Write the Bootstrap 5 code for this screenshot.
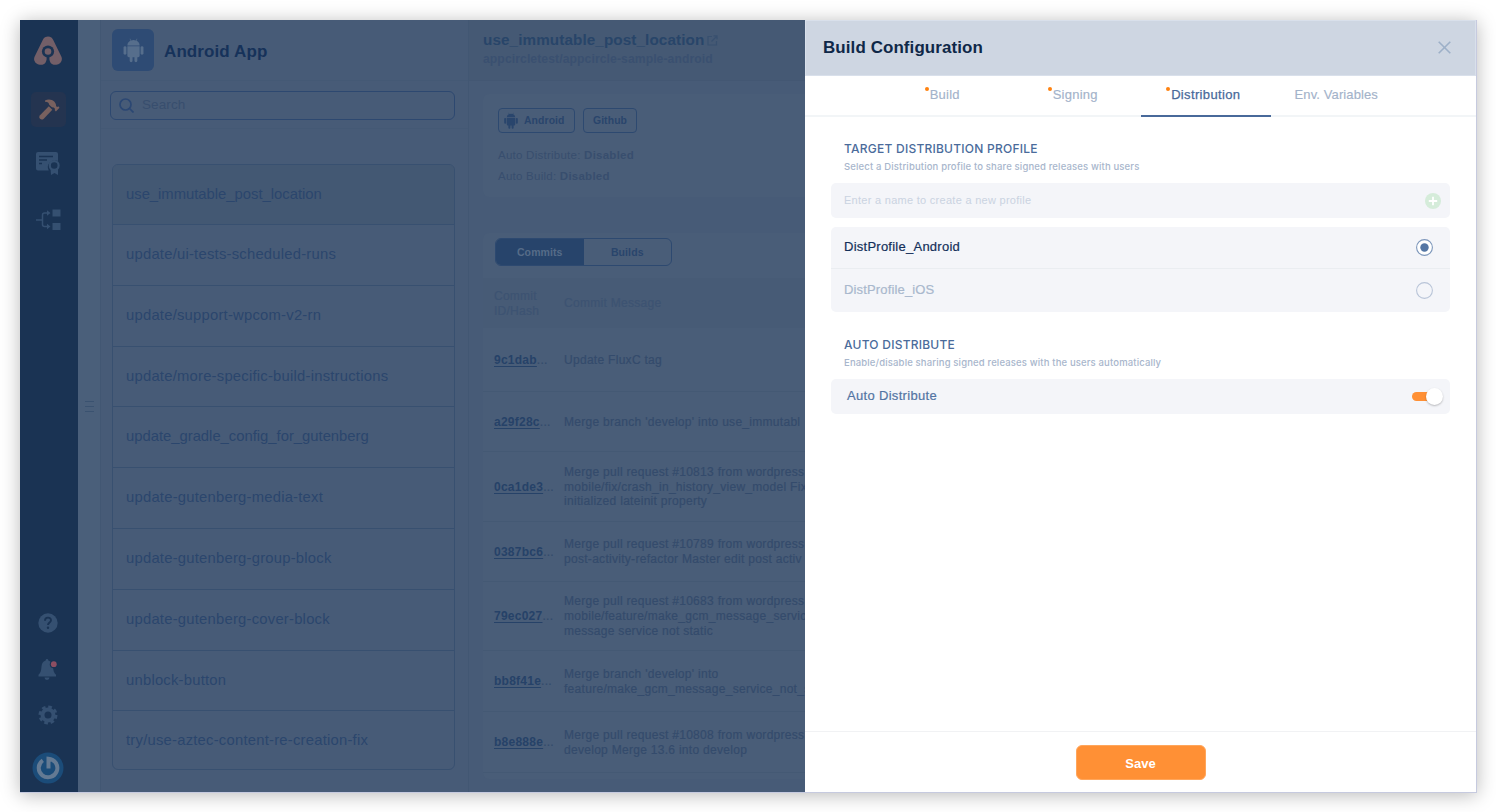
<!DOCTYPE html>
<html lang="en">
<head>
<meta charset="utf-8">
<meta name="viewport" content="width=device-width, initial-scale=1">
<title>Build Configuration</title>
<link href="https://cdn.jsdelivr.net/npm/bootstrap@5.3.0/dist/css/bootstrap.min.css" rel="stylesheet">
<style>
body{font-family:"Liberation Sans",Arial,sans-serif;background:#fff;height:812px;padding:20px;line-height:1.2;letter-spacing:.1px}
.frame{width:1457px;height:773px;border-right:1px solid #c6cadf;border-bottom:1px solid #c6cadf;box-shadow:0 2px 18px rgba(0,0,0,.28);background:#475b77}
.t{white-space:nowrap}
.rail{width:58px;background:#1a3353;padding:16px 2px 8px 0}
.rail svg{display:block}
.hot{width:35px;height:35px;border-radius:5px;background:#243450;margin-top:27px}
.grip{width:23px;background:#4a5f7a;border-right:1px solid #425773}
.side{width:368px;border-right:1px solid #425773}
.sidehead{height:61px;border-bottom:1px solid #445975;padding-left:11px}
.appicon{width:42px;height:42px;border-radius:6px;background:#2e4b74}
.apptitle{font-size:17px;font-weight:700;color:#16325a;margin:4px 0 0 10px}
.search{margin:10px 13px 0 9px;height:29px;border:1.5px solid #2d4870;border-radius:6px;padding-left:8px}
.search .t{font-size:13.5px;color:#384e6e;margin-left:8px}
.strip{margin-top:8px;height:1px;background:#445975}
.branches{margin:35px 13px 0 11px;height:606px;border:1px solid #385070;border-radius:6px}
.branches .brow{height:60.8px;padding:0 0 0 13px;border-bottom:1px solid #385070;font-size:14.8px;color:#2b466d;flex:none;letter-spacing:.23px}
.branches .brow.snug{letter-spacing:0}
.branches .brow:first-child{background:#435873;height:60px}
.branches .brow:last-child{border:0;height:59px}
.content{width:336px}
.repo{height:61px;background:#455974;border-bottom:1px solid #435773;padding:11px 0 0 14px}
.repo1{font-size:15.25px;font-weight:700;color:#284569}
.repo2{font-size:12.15px;font-weight:700;color:#3a5070;margin-top:3px}
.panel{margin-left:14px;background:#495d78;border-radius:6px 0 0 6px}
.tagbtn{height:25px;border:1.4px solid #2d4970;border-radius:4px;font-size:10.4px;font-weight:700;color:#29456c}
.tagbtn .t{margin-top:2px}
.meta{font-size:11.5px;color:#384e6e;letter-spacing:.25px}
.seg{width:177px;height:28px;border:1.5px solid #2d4970;border-radius:6px;font-size:10.5px;font-weight:700;color:#29456c;overflow:hidden}
.seg .on{background:#27446b;color:#566c88}
.trow{border-bottom:1px solid #445974;padding:1px 0 0 11px;font-size:12px;line-height:14.7px;color:#344b6c;letter-spacing:.29px;-webkit-text-stroke:.2px}
.trow.h{background:#475b76;color:#3d5372;border:0}
.trow .id{width:70px;flex:none;letter-spacing:.25px}
.trow .id b{color:#264268;text-decoration:underline;text-underline-offset:2px;-webkit-text-stroke:0}
.drawer{width:671px;background:#fff}
.dhead{height:56px;background:#ced6e2;border:1px solid #d9e0eb;padding:0 24px 0 17px}
.dtitle{font-size:16.95px;font-weight:700;color:#0f2848;margin-top:1px}
.dhead svg{margin-bottom:2px}
.tabs{height:41px;border-bottom:2px solid #f2f5f7}
.tab{width:130.5px;height:41px;padding-bottom:4px;font-size:13px;color:#a3b3ca;-webkit-text-stroke:.15px}
.tab.req{padding-right:5px;letter-spacing:.25px}
.tab.on{color:#48699a;border-bottom:2px solid #48699a;padding-bottom:2px;letter-spacing:.35px;-webkit-text-stroke:.25px}
.tab i{width:4px;height:4px;border-radius:50%;background:#ff8210;margin:-11px 1px 0 0}
.sec{font-family:Inter,sans-serif;font-size:12px;font-weight:500;color:#4a6b9b;line-height:15px;padding-left:13px;letter-spacing:.24px}
.sub{font-family:Inter,sans-serif;font-size:9.5px;font-weight:500;color:#a8b6cc;line-height:12px;padding-left:13px;margin-top:5px;letter-spacing:.15px}
.box{background:#f4f5f9;border-radius:5px}
.newname{font-size:11px;color:#cad3e1;letter-spacing:.28px}
.opt{font-size:13px;letter-spacing:.25px;margin-top:-2px;-webkit-text-stroke:.2px}
.save{width:130px;height:35px;border-radius:6px;background:#ff9035;color:#fff;border:1px solid #ffa65c;font-size:13px;font-weight:700;padding:2px 0 0}
.track{width:24px;height:9px;border-radius:5px;background:#ff9035}
.knob{width:17px;height:17px;border-radius:50%;background:#fff;box-shadow:0 1px 2px rgba(0,0,0,.25);margin-left:-10px}
.dfoot{height:61px;border-top:1px solid #f1f2f4;padding-top:13px}
</style>
</head>
<body>
<svg width="0" height="0" class="position-absolute"><defs>
<symbol id="droid" viewBox="0 0 24 26"><path d="M5.600 8.200a6.500 6 0 0 1 3.400-5L7.900 1.400l.5-.3 1.200 1.900a7.500 7.500 0 0 1 4.800 0L15.600 1.100l.5.3L15 3.200a6.500 6 0 0 1 3.400 5z"/><path d="M5.600 9h12.800v10a1.500 1.500 0 0 1-1.500 1.500H16v3.700a1.500 1.500 0 0 1-3 0v-3.700h-2v3.700a1.500 1.500 0 0 1-3 0v-3.700h-.9A1.500 1.500 0 0 1 5.600 19z"/><rect x="1.600" y="9" width="3" height="9" rx="1.500"/><rect x="19.400" y="9" width="3" height="9" rx="1.500"/></symbol>
</defs></svg>
<div class="frame d-flex overflow-visible">
  <nav class="rail d-flex flex-column align-items-center">
    <svg width="28" height="29" viewBox="0 0 28 29"><path d="M14 6.200 5.800 23h16.400z" fill="#735f68" stroke="#735f68" stroke-width="11.400" stroke-linejoin="round"/><path fill="#1a3353" d="M12.600 19v4.500Q12 27.500 8.500 29h11Q16 27.500 15.400 23.500V19z"/><circle cx="14" cy="15.500" r="6.100" fill="#1a3353"/><circle cx="14" cy="15.500" r="3.300" fill="#735f68"/></svg>
    <div class="hot d-flex align-items-center justify-content-center">
      <svg width="23" height="22" viewBox="0 0 23 22" fill="#78615f"><path d="M8 1.500C11-.2 15 .2 17.500 2.700l1.300 2.200c.3.800.2 1.500.3 2.300l1.300.7.9-.7 1.200 1.500-3.600 3.700-1.300-1.500.5-1-1.300-1.500c-1 .3-1.700.1-2.500-.6l-2.100-2C12 3.700 10.500 2.700 8 2.800z"/><path d="m11.800 7.300 3.500 3.500-8.500 8.900c-2.700 2.500-6-.9-3.800-3.500z"/></svg>
    </div>
    <svg class="mt-4" width="26" height="25" viewBox="0 0 26 25"><path fill="#355071" d="M3 1h18a2 2 0 0 1 2 2v7a7 7 0 0 0-9.300 9.500H3a2 2 0 0 1-2-2V3a2 2 0 0 1 2-2z"/><path stroke="#1a3353" stroke-width="1.500" d="M4 5.500h14M4 9h8M4 12.500h3"/><path fill="#355071" d="m15.500 17 7.500.5V24l-3.500-2-3.500 2z"/><circle cx="19.200" cy="14.500" r="4.400" fill="#1a3353" stroke="#355071" stroke-width="2.200"/></svg>
    <svg width="26" height="22" viewBox="0 0 26 22" style="margin-top:33px"><path fill="none" stroke="#355071" stroke-width="1.500" d="M1 11h6M14 4H9.500Q7.500 4 7.500 6v9.500q0 2 2 2H14"/><path fill="#355071" d="M12 1.200 15.500 4 12 6.800zM12 14.700l3.500 2.800-3.500 2.800zM17.500.5h8v7h-8zM17.500 14h8v7h-8z"/></svg>
    <div class="flex-grow-1"></div>
    <svg width="20" height="20" viewBox="0 0 20 20"><circle cx="10" cy="10" r="9.700" fill="#355071"/><path fill="none" stroke="#1a3353" stroke-width="1.900" d="M7 7.800c0-4.200 6-4 6-.5 0 2.200-3 2.400-3 4.800"/><circle cx="10" cy="14.800" r="1.200" fill="#1a3353"/></svg>
    <svg width="20" height="22" viewBox="0 0 20 22" style="margin-top:25px"><path fill="#355071" d="M9 1c.9 0 1.300.6 1.300 1.400 3.200.9 4.400 3 4.700 6 .3 4.200.8 6.300 3 8.300v1.800H.5v-1.800c2.200-2 2.700-4.100 3-8.300.3-3 1.200-5.100 4.200-6C7.700 1.600 8.100 1 9 1zM6.500 19.500h5a2.500 2.500 0 0 1-5 0z"/><circle cx="15.800" cy="6.200" r="4" fill="#1a3353"/><circle cx="15.800" cy="6.200" r="2.900" fill="#8d4e62"/></svg>
    <svg width="20" height="20" viewBox="-10 -10 20 20" style="margin-top:25px"><circle r="5.500" fill="none" stroke="#355071" stroke-width="4"/><circle r="8" fill="none" stroke="#355071" stroke-width="3" stroke-dasharray="3.600 2.683"/></svg>
    <svg width="32" height="32" viewBox="0 0 32 32" style="margin-top:27px"><circle cx="16" cy="16" r="15.500" fill="#1b4c79"/><path fill="none" stroke="#647a93" stroke-width="4" d="M10.800 8.300A9.300 9.300 0 1 0 16.500 6.700v9.800"/></svg>
  </nav>
  <div class="grip d-flex flex-column justify-content-center align-items-center"><svg width="9" height="12" viewBox="0 0 9 12"><path stroke="#3a5270" d="M0 1.500h9M0 6.500h9M0 11.500h9"/></svg></div>
  <section class="side">
    <div class="sidehead d-flex align-items-center"><div class="appicon d-flex align-items-center justify-content-center"><svg width="23" height="26" fill="#566e8c"><use href="#droid"/></svg></div><span class="apptitle t">Android App</span></div>
    <div class="search d-flex align-items-center"><svg width="15" height="15" viewBox="0 0 15 15" fill="none" stroke="#2b4773" stroke-width="1.700"><circle cx="6.500" cy="6.500" r="5.500"/><path d="m10.500 10.500 4 4"/></svg><span class="t">Search</span></div>
    <div class="strip"></div>
    <div class="branches d-flex flex-column overflow-hidden">
      <div class="brow snug d-flex align-items-center"><span class="t">use_immutable_post_location</span></div>
      <div class="brow d-flex align-items-center"><span class="t">update/ui-tests-scheduled-runs</span></div>
      <div class="brow d-flex align-items-center"><span class="t">update/support-wpcom-v2-rn</span></div>
      <div class="brow d-flex align-items-center"><span class="t">update/more-specific-build-instructions</span></div>
      <div class="brow snug d-flex align-items-center"><span class="t">update_gradle_config_for_gutenberg</span></div>
      <div class="brow d-flex align-items-center"><span class="t">update-gutenberg-media-text</span></div>
      <div class="brow d-flex align-items-center"><span class="t">update-gutenberg-group-block</span></div>
      <div class="brow d-flex align-items-center"><span class="t">update-gutenberg-cover-block</span></div>
      <div class="brow d-flex align-items-center"><span class="t">unblock-button</span></div>
      <div class="brow d-flex align-items-center"><span class="t">try/use-aztec-content-re-creation-fix</span></div>
    </div>
  </section>
  <main class="content overflow-hidden">
    <div class="repo"><div class="d-flex align-items-center"><span class="repo1 t">use_immutable_post_location</span><svg width="11" height="11" viewBox="0 0 11 11" fill="none" stroke="#38506f" stroke-width="1.200" style="margin-left:3px"><path d="M5 1.500H1v8.500h8.500V6M6.500.8H10v3.500M10 1 4.500 6.500"/></svg></div><div class="repo2"><span class="t">appcircletest/appcircle-sample-android</span></div></div>
    <div class="panel" style="margin-top:13px;height:103px;padding:14px 0 0 15px">
      <div class="d-flex gap-2"><div class="tagbtn d-flex align-items-center" style="width:77px;padding-left:4px"><svg width="16" height="17" fill="#29456c"><use href="#droid"/></svg><span class="t" style="margin-left:5px">Android</span></div><div class="tagbtn d-flex align-items-center justify-content-center" style="width:54px"><span class="t">Github</span></div></div>
      <div class="meta" style="margin-top:16px"><span class="t">Auto Distribute: <b>Disabled</b></span></div>
      <div class="meta" style="margin-top:7px"><span class="t">Auto Build: <b>Disabled</b></span></div>
    </div>
    <div class="panel" style="margin-top:36px;height:546px;padding-top:5px">
      <div class="seg d-flex" style="margin-left:12px"><div class="on w-50 d-flex align-items-center justify-content-center"><span class="t">Commits</span></div><div class="w-50 d-flex align-items-center justify-content-center"><span class="t">Builds</span></div></div>
      <div class="trow h d-flex align-items-center" style="height:50px;margin-top:12px"><div class="id"><span class="t">Commit</span><br><span class="t">ID/Hash</span></div><span class="t">Commit Message</span></div>
      <div class="trow d-flex align-items-center" style="height:64px"><div class="id"><span class="t"><b>9c1dab</b>...</span></div><div><span class="t">Update FluxC tag</span></div></div>
      <div class="trow d-flex align-items-center" style="height:60px"><div class="id"><span class="t"><b>a29f28c</b>...</span></div><div><span class="t">Merge branch 'develop' into use_immutabl</span></div></div>
      <div class="trow d-flex align-items-center" style="height:70px"><div class="id"><span class="t"><b>0ca1de3</b>...</span></div><div><span class="t">Merge pull request #10813 from wordpress</span><br><span class="t">mobile/fix/crash_in_history_view_model Fix</span><br><span class="t">initialized lateinit property</span></div></div>
      <div class="trow d-flex align-items-center" style="height:60px"><div class="id"><span class="t"><b>0387bc6</b>...</span></div><div><span class="t">Merge pull request #10789 from wordpress</span><br><span class="t">post-activity-refactor Master edit post activ</span></div></div>
      <div class="trow d-flex align-items-center" style="height:69px"><div class="id"><span class="t"><b>79ec027</b>...</span></div><div><span class="t">Merge pull request #10683 from wordpress</span><br><span class="t">mobile/feature/make_gcm_message_servic</span><br><span class="t">message service not static</span></div></div>
      <div class="trow d-flex align-items-center" style="height:61px"><div class="id"><span class="t"><b>bb8f41e</b>...</span></div><div><span class="t">Merge branch 'develop' into</span><br><span class="t">feature/make_gcm_message_service_not_s</span></div></div>
      <div class="trow d-flex align-items-center" style="height:61px"><div class="id"><span class="t"><b>b8e888e</b>...</span></div><div><span class="t">Merge pull request #10808 from wordpress</span><br><span class="t">develop Merge 13.6 into develop</span></div></div>
    </div>
  </main>
  <aside class="drawer d-flex flex-column">
    <div class="dhead d-flex align-items-center justify-content-between"><span class="dtitle t">Build Configuration</span><svg width="13" height="13" viewBox="0 0 13 13" stroke="#9db0c8" stroke-width="1.600"><path d="m.7.700 11.600 11.600M12.300.7.700 12.300"/></svg></div>
    <div class="tabs d-flex justify-content-center">
      <div class="tab req d-flex align-items-center justify-content-center"><i></i><span class="t">Build</span></div>
      <div class="tab req d-flex align-items-center justify-content-center"><i></i><span class="t">Signing</span></div>
      <div class="tab req on d-flex align-items-center justify-content-center"><i></i><span class="t">Distribution</span></div>
      <div class="tab d-flex align-items-center justify-content-center"><span class="t">Env. Variables</span></div>
    </div>
    <div class="flex-grow-1" style="padding:24px 26px 0">
      <div class="sec"><span class="t">TARGET DISTRIBUTION PROFILE</span></div>
      <div class="sub"><span class="t">Select a Distribution profile to share signed releases with users</span></div>
      <div class="box d-flex align-items-center justify-content-between" style="height:35px;margin-top:10px;padding:0 9px 0 13px"><span class="t newname">Enter a name to create a new profile</span><svg width="16" height="16" viewBox="0 0 16 16"><circle cx="8" cy="8" r="8" fill="#d5ecda"/><path stroke="#fff" stroke-width="1.800" d="M8 3.800v8.400M3.800 8h8.400"/></svg></div>
      <div class="box" style="margin-top:9px;height:85px">
        <div class="d-flex align-items-center justify-content-between" style="height:42px;padding:0 17px 0 13px;border-bottom:1px solid #eaedf1"><span class="t opt" style="color:#14305a">DistProfile_Android</span><svg width="17" height="17" viewBox="0 0 17 17"><circle cx="8.500" cy="8.500" r="7.900" fill="#fff" stroke="#7d97bb" stroke-width="1.100"/><circle cx="8.500" cy="8.500" r="4.200" fill="#5476a4"/></svg></div>
        <div class="d-flex align-items-center justify-content-between" style="height:43px;padding:0 17px 0 13px"><span class="t opt" style="color:#a9b8cd;letter-spacing:.15px">DistProfile_iOS</span><svg width="17" height="17" viewBox="0 0 17 17"><circle cx="8.500" cy="8.500" r="7.900" fill="none" stroke="#b9c5d8" stroke-width="1.100"/></svg></div>
      </div>
      <div class="sec" style="margin-top:25px"><span class="t">AUTO DISTRIBUTE</span></div>
      <div class="sub"><span class="t">Enable/disable sharing signed releases with the users automatically</span></div>
      <div class="box d-flex align-items-center justify-content-between" style="height:35px;margin-top:10px;padding:0 7px 0 16px"><span class="t opt" style="color:#5374a3;letter-spacing:.32px">Auto Distribute</span><div class="d-flex align-items-center"><div class="track"></div><div class="knob"></div></div></div>
    </div>
    <div class="dfoot d-flex justify-content-center align-items-start"><button class="btn save">Save</button></div>
  </aside>
</div>
<script src="https://cdn.jsdelivr.net/npm/bootstrap@5.3.0/dist/js/bootstrap.bundle.min.js"></script>
</body>
</html>
